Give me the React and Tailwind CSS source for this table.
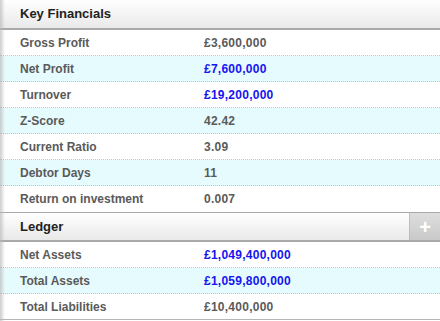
import React from 'react'

const keyFinancials = [
  { label: 'Gross Profit', value: '£3,600,000' },
  { label: 'Net Profit', value: '£7,600,000', link: true },
  { label: 'Turnover', value: '£19,200,000', link: true },
  { label: 'Z-Score', value: '42.42' },
  { label: 'Current Ratio', value: '3.09' },
  { label: 'Debtor Days', value: '11' },
  { label: 'Return on investment', value: '0.007' },
]

const ledger = [
  { label: 'Net Assets', value: '£1,049,400,000', link: true },
  { label: 'Total Assets', value: '£1,059,800,000', link: true },
  { label: 'Total Liabilities', value: '£10,400,000' },
]

const SectionHeader = ({ title, withPlus, topBorder }) => (
  <div
    className={`flex h-[30px] items-stretch border-b-2 border-[#a9a9a9] bg-gradient-to-b from-white to-[#e9e9e9] ${
      topBorder ? 'border-t border-t-[#a9a9a9]' : ''
    }`}
  >
    <div className="flex flex-1 items-center pl-5 text-[13px] font-bold text-[#222]">{title}</div>
    {withPlus && (
      <div className="flex w-[31px] items-center justify-center border-l border-[#bdbdbd] bg-gradient-to-b from-[#dedede] to-[#c9c9c9] text-[20px] font-bold leading-none text-white">
        +
      </div>
    )}
  </div>
)

const Rows = ({ rows, lastSolid }) => (
  <div>
    {rows.map((row, i) => {
      const isLast = i === rows.length - 1
      return (
        <div
          key={row.label}
          className={`flex h-[26px] items-center text-[12px] font-bold ${
            i % 2 === 1 ? 'bg-[#e6fbfe]' : 'bg-white'
          } ${
            isLast
              ? lastSolid
                ? 'border-b border-[#b5b5b5]'
                : ''
              : 'border-b border-dotted border-[#c4c4c4]'
          }`}
        >
          <div className="w-[204px] pl-5 text-[#5a5a5a]">{row.label}</div>
          <div className={`tracking-[0.25px] ${row.link ? 'text-[#1515f0]' : 'text-[#5a5a5a]'}`}>
            {row.value}
          </div>
        </div>
      )
    })}
  </div>
)

export default function App() {
  return (
    <div
      className="relative h-[321px] w-[440px] overflow-hidden bg-white"
      style={{ fontFamily: '"Liberation Sans", Arial, sans-serif' }}
    >
      <SectionHeader title="Key Financials" />
      <Rows rows={keyFinancials} />
      <SectionHeader title="Ledger" withPlus topBorder />
      <Rows rows={ledger} lastSolid />
      {/* left edge shadow */}
      <div className="pointer-events-none absolute inset-y-0 left-0 w-[5px] bg-gradient-to-r from-[#b8b8b8] to-transparent opacity-70" />
    </div>
  )
}
